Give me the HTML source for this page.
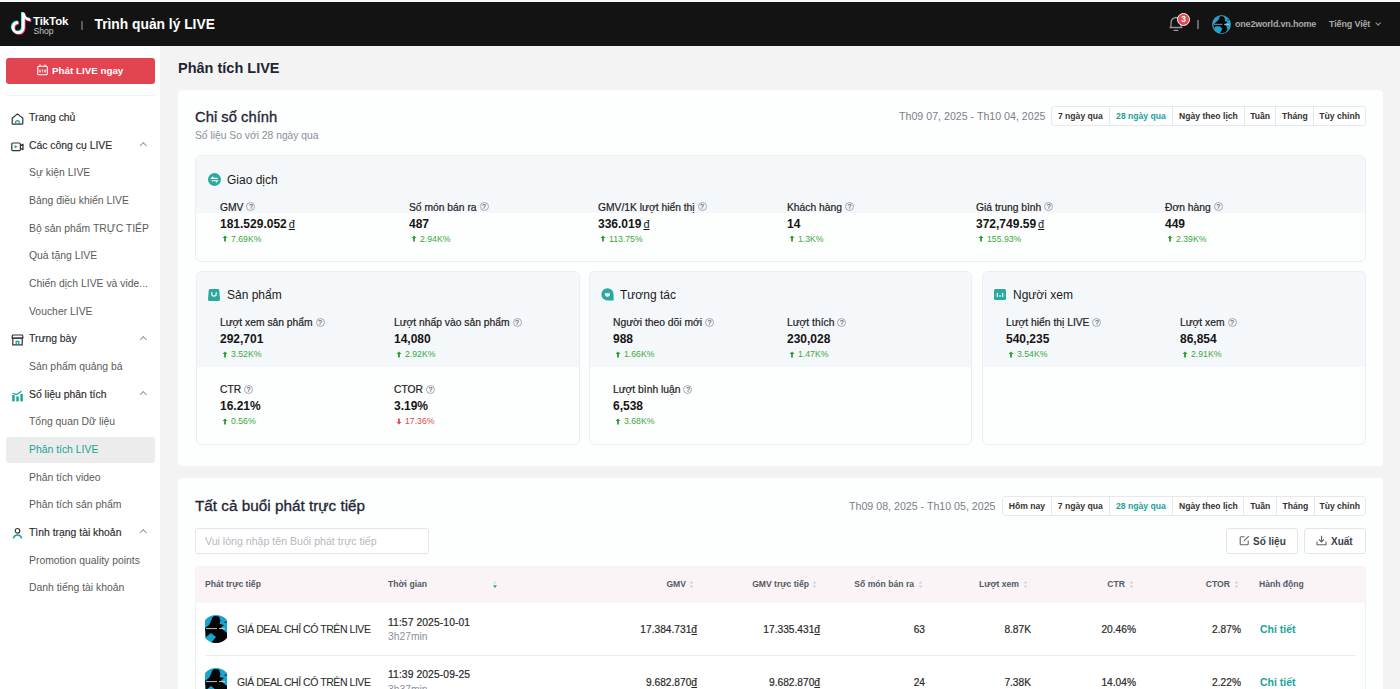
<!DOCTYPE html>
<html><head><meta charset="utf-8">
<style>
*{margin:0;padding:0;box-sizing:border-box}
html,body{width:1400px;height:689px;overflow:hidden;background:#f4f3f4;font-family:"Liberation Sans",sans-serif;color:#222}
.a{position:absolute;white-space:nowrap}
#top{position:absolute;left:0;top:0;width:1400px;height:2px;background:#f4f9f9}
#hdr{position:absolute;left:0;top:2px;width:1400px;height:44px;background:#131313}
#side{position:absolute;left:0;top:46px;width:160px;height:643px;background:#fff}
.mi{position:absolute;left:29px;font-size:10.4px;color:#2b2b2b;line-height:14px;-webkit-text-stroke:0.15px #2b2b2b}
.si{position:absolute;left:29px;font-size:10.4px;color:#5a5a5a;line-height:14px}
.chev{position:absolute;left:140.7px;width:4.6px;height:4.6px;border-left:1px solid #999;border-top:1px solid #999;transform:rotate(45deg)}
.card{position:absolute;left:178px;width:1205px;background:#fdfefe;border-radius:4px}
.grp{position:absolute;height:20px;border:1px solid #e6e8ec;border-radius:3px;display:flex;background:#fff}
.grp span{display:block;height:18px;line-height:18px;font-size:8.6px;font-weight:bold;color:#333;padding:0;text-align:center;white-space:nowrap;border-left:1px solid #e6e8ec}
.grp span:first-child{border-left:none}
.grp span.on{color:#1aa29a}
.box{position:absolute;border:1px solid #eceef2;border-radius:6px;background:linear-gradient(#f5f8fa 0,#f5f8fa 57px,#fdfefe 57px)}
.lbl{position:absolute;font-size:10.3px;color:#222;line-height:13px;-webkit-text-stroke:0.2px #222}
.val{position:absolute;font-size:12px;font-weight:bold;color:#151515;line-height:15px}
.chg{position:absolute;font-size:8.7px;color:#3aa83a;line-height:11px}
.q{display:inline-block;width:9px;height:9px;border:0.9px solid #a4a8b0;border-radius:50%;margin-left:3px;vertical-align:1.2px;font-size:6.5px;line-height:7.5px;text-align:center;color:#a0a4aa;font-weight:normal}
</style></head><body>
<div id="top"></div>
<div id="hdr">
<svg class="a" style="left:0;top:0" width="40" height="40" viewBox="0 2 40 40"><path d="M23.3 12.8 V27.6 A5.1 5.1 0 1 1 18.2 22.5 M23.3 13.3 C23.6 16.8 26.6 19.5 30.4 19.8" transform="translate(-0.9,-0.7)" fill="none" stroke="#25f4ee" stroke-width="2.8"/><path d="M23.3 12.8 V27.6 A5.1 5.1 0 1 1 18.2 22.5 M23.3 13.3 C23.6 16.8 26.6 19.5 30.4 19.8" transform="translate(0.9,0.7)" fill="none" stroke="#fe2c55" stroke-width="2.8"/><path d="M23.3 12.8 V27.6 A5.1 5.1 0 1 1 18.2 22.5 M23.3 13.3 C23.6 16.8 26.6 19.5 30.4 19.8" transform="translate(0,0)" fill="none" stroke="#fff" stroke-width="2.8"/></svg>
<div class="a" style="left:33px;top:11.5px;font-size:11.5px;font-weight:bold;color:#fff;line-height:14px;letter-spacing:-0.1px">TikTok</div>
<div class="a" style="left:33.5px;top:23.5px;font-size:8.6px;color:#c4c4c4;line-height:10px">Shop</div>
<div class="a" style="left:81px;top:19px;width:1.5px;height:9px;background:#5a5a5a"></div>
<div class="a" style="left:94.5px;top:13.5px;font-size:13.8px;font-weight:bold;color:#fff;line-height:18px">Trình quản lý LIVE</div>
<svg class="a" style="left:1168px;top:12px" width="16" height="18" viewBox="0 0 16 18">
<path d="M3 13V8.5a5 5 0 0 1 10 0V13" fill="none" stroke="#999" stroke-width="1.3"/>
<path d="M1.5 13.5h13" stroke="#999" stroke-width="1.4"/>
<path d="M6 16.3h4" stroke="#999" stroke-width="1.3" stroke-linecap="round"/>
</svg>
<div class="a" style="left:1177px;top:11px;width:13px;height:13px;border-radius:50%;background:#e5484d;border:1px solid #fff;color:#fff;font-size:8.5px;font-weight:bold;line-height:11px;text-align:center">3</div>
<div class="a" style="left:1197px;top:18px;width:1.5px;height:9px;background:#666"></div>
<svg class="a" style="left:1211.5px;top:12.5px" width="19" height="19" viewBox="0 0 22 22"><defs><clipPath id="av"><circle cx="11" cy="11" r="10.5"/></clipPath></defs><g clip-path="url(#av)"><rect width="22" height="22" fill="#1ba3d0"/><path d="M9 1.5 L13 1.5 L15 4 L15 7 L18 8 L16 10 L14 11 L17 13 L18 17 L15 21 L9 21 L12 16 L9 13 L4 13 L2.5 16 L1.5 11 L5 8 L8 5z" fill="#050505"/><path d="M17 5.5 L20 5 L19 6.5z" fill="#050505"/><path d="M2 10.8 H12 M14 10.8 H20" stroke="#e6e6e6" stroke-width="0.9" opacity="0.8"/></g><circle cx="11" cy="11" r="10.5" fill="none" stroke="#8cc" stroke-width="0.5"/></svg>
<div class="a" style="left:1235px;top:16px;font-size:9px;font-weight:bold;color:#a9a9a9;line-height:12px;letter-spacing:-0.2px">one2world.vn.home</div>
<div class="a" style="left:1329px;top:16px;font-size:9px;font-weight:bold;color:#a9a9a9;line-height:12px;letter-spacing:-0.15px">Tiếng Việt</div>
<div class="a" style="left:1375.5px;top:18.5px;width:4.3px;height:4.3px;border-right:1px solid #999;border-bottom:1px solid #999;transform:rotate(45deg)"></div>
</div>
<div id="side">
<div class="a" style="left:6px;top:12px;width:149px;height:26px;background:#e24452;border-radius:3px"></div>
<svg class="a" style="left:37px;top:18px" width="11" height="12" viewBox="0 0 11 12"><rect x="0.7" y="2.2" width="9.6" height="8.6" rx="1" fill="none" stroke="#fff" stroke-width="1.1"/><path d="M3 0.6 V3 M8 0.6 V3" stroke="#fff" stroke-width="1.1"/><path d="M2 5.5 L3 8.5 L4 5.5 M5.5 5.5 V8.5 M7 5.5 L8 8.5 L9 5.5" fill="none" stroke="#fff" stroke-width="0.7"/></svg>
<div class="a" style="left:52px;top:18px;font-size:9.8px;font-weight:bold;color:#fff;line-height:13px">Phát LIVE ngay</div>
<div class="a" style="left:6px;top:49px;width:149px;height:1px;background:#eef3f4"></div>
<div class="mi" style="top:65.0px">Trang chủ</div>
<svg class="a" style="left:11px;top:66.5px" width="13" height="12" viewBox="0 0 13 12"><path d="M1.2 5.2 L6.5 0.9 L11.8 5.2 V10.4 a0.8 0.8 0 0 1 -0.8 0.8 H2 a0.8 0.8 0 0 1 -0.8 -0.8z" fill="none" stroke="#333" stroke-width="1.2" stroke-linejoin="round"/><path d="M4.6 11.2 V9.6 a1.9 1.9 0 0 1 3.8 0 V11.2" fill="none" stroke="#1aa29a" stroke-width="1.3"/></svg>
<div class="mi" style="top:92.7px">Các công cụ LIVE</div>
<svg class="a" style="left:11px;top:95.5px" width="13" height="10" viewBox="0 0 13 10"><rect x="0.8" y="1" width="8.6" height="7.6" rx="1.2" fill="none" stroke="#333" stroke-width="1.2"/><path d="M9.4 3.6 L12 2.2 V7.6 L9.4 6.2" fill="none" stroke="#333" stroke-width="1.2" stroke-linejoin="round"/><path d="M3.6 3 L6.6 4.8 L3.6 6.6z" fill="#1aa29a"/></svg>
<div class="chev" style="top:96.8px"></div>
<div class="si" style="top:120.3px">Sự kiện LIVE</div>
<div class="si" style="top:148.0px">Bảng điều khiển LIVE</div>
<div class="si" style="top:175.7px">Bộ sản phẩm TRỰC TIẾP</div>
<div class="si" style="top:203.4px">Quà tặng LIVE</div>
<div class="si" style="top:231.0px">Chiến dịch LIVE và vide...</div>
<div class="si" style="top:258.7px">Voucher LIVE</div>
<div class="mi" style="top:286.4px">Trưng bày</div>
<svg class="a" style="left:11px;top:288.0px" width="13" height="12" viewBox="0 0 13 12"><path d="M1.5 1 H11.5 L12 4 H1z" fill="none" stroke="#333" stroke-width="1.2" stroke-linejoin="round"/><path d="M1.8 4 V10.8 H11.2 V4" fill="none" stroke="#333" stroke-width="1.2"/><path d="M1.2 4.2 H11.8" stroke="#333" stroke-width="1.2"/><path d="M5.2 10.8 V7.4 H7.8 V10.8" fill="none" stroke="#1aa29a" stroke-width="1.3"/></svg>
<div class="chev" style="top:290.5px"></div>
<div class="si" style="top:314.0px">Sản phẩm quảng bá</div>
<div class="mi" style="top:341.7px">Số liệu phân tích</div>
<svg class="a" style="left:11px;top:344.0px" width="13" height="12" viewBox="0 0 13 12"><rect x="1.2" y="5" width="2.4" height="6.4" fill="#1aa29a"/><rect x="5.3" y="6.4" width="2.4" height="5" fill="#1aa29a"/><rect x="9.4" y="4" width="2.4" height="7.4" fill="#1aa29a"/><path d="M1.5 3.2 L5.5 4.6 L10.5 1.2" fill="none" stroke="#1aa29a" stroke-width="1.2"/></svg>
<div class="chev" style="top:345.8px"></div>
<div class="si" style="top:369.4px">Tổng quan Dữ liệu</div>
<div class="a" style="left:6px;top:390.5px;width:149px;height:26px;background:#ececec;border-radius:3px"></div>
<div class="si" style="top:397.0px;color:#1aa29a">Phân tích LIVE</div>
<div class="si" style="top:424.7px">Phân tích video</div>
<div class="si" style="top:452.4px">Phân tích sản phẩm</div>
<div class="mi" style="top:480.0px">Tình trạng tài khoản</div>
<svg class="a" style="left:11px;top:481.0px" width="13" height="13" viewBox="0 0 13 13"><circle cx="6.5" cy="3.8" r="2.3" fill="none" stroke="#333" stroke-width="1.2"/><path d="M2.4 11 a4.3 4.3 0 0 1 8.2 0" fill="none" stroke="#1aa29a" stroke-width="1.3" stroke-linecap="round"/></svg>
<div class="chev" style="top:484.1px"></div>
<div class="si" style="top:507.7px">Promotion quality points</div>
<div class="si" style="top:535.4px">Danh tiếng tài khoản</div>
</div>
<div class="a" style="left:178px;top:60px;font-size:14.5px;font-weight:bold;color:#1e2533">Phân tích LIVE</div>
<div class="card" style="top:90px;height:376px"></div>
<div class="a" style="left:195px;top:108px;font-size:14.8px;color:#1e2533;line-height:18px;-webkit-text-stroke:0.3px #1e2533">Chỉ số chính</div>
<div class="a" style="left:195px;top:129px;font-size:10.3px;color:#8a8f99;line-height:13px">Số liệu So với 28 ngày qua</div>
<div class="a" style="left:899px;top:110px;font-size:10.65px;color:#7a808a;line-height:13px">Th09 07, 2025 - Th10 04, 2025</div>
<div class="grp" style="left:1051px;top:106px"><span style="width:56.8px">7 ngày qua</span><span style="width:63.3px" class="on">28 ngày qua</span><span style="width:71.7px">Ngày theo lịch</span><span style="width:31.6px">Tuần</span><span style="width:38.1px">Tháng</span><span style="width:51.4px">Tùy chỉnh</span></div>
<div class="box" style="left:195px;top:155px;width:1171px;height:107px"></div>
<svg class="a" style="left:208px;top:173.0px" width="13" height="13" viewBox="0 0 13 13"><circle cx="6.5" cy="6.5" r="6.5" fill="#2ba89f"/><path d="M9.6 5.4 H3.6 L5.2 3.7 M3.6 7.7 H9.6 L8 9.4" fill="none" stroke="#fff" stroke-width="1.15"/></svg>
<div class="a" style="left:227px;top:172.5px;font-size:12px;color:#1a1a1a;line-height:15px">Giao dịch</div>
<div class="lbl" style="left:220px;top:200.5px">GMV<span class="q">?</span></div>
<div class="val" style="left:220px;top:216.5px">181.529.052<span style="font-weight:normal;text-decoration:underline;margin-left:2px;font-size:11px">đ</span></div>
<div class="chg" style="left:220px;top:233.5px;color:#3aa83a"><svg width="6" height="7" viewBox="0 0 6 7" style="margin:0 3px 0 2px;vertical-align:-0.5px"><path d="M3 0.5 L5.5 3 H3.9 V6.5 H2.1 V3 H0.5z" fill="#2f9a2f"/></svg>7.69K%</div>
<div class="lbl" style="left:409px;top:200.5px">Số món bán ra<span class="q">?</span></div>
<div class="val" style="left:409px;top:216.5px">487</div>
<div class="chg" style="left:409px;top:233.5px;color:#3aa83a"><svg width="6" height="7" viewBox="0 0 6 7" style="margin:0 3px 0 2px;vertical-align:-0.5px"><path d="M3 0.5 L5.5 3 H3.9 V6.5 H2.1 V3 H0.5z" fill="#2f9a2f"/></svg>2.94K%</div>
<div class="lbl" style="left:598px;top:200.5px">GMV/1K lượt hiển thị<span class="q">?</span></div>
<div class="val" style="left:598px;top:216.5px">336.019<span style="font-weight:normal;text-decoration:underline;margin-left:2px;font-size:11px">đ</span></div>
<div class="chg" style="left:598px;top:233.5px;color:#3aa83a"><svg width="6" height="7" viewBox="0 0 6 7" style="margin:0 3px 0 2px;vertical-align:-0.5px"><path d="M3 0.5 L5.5 3 H3.9 V6.5 H2.1 V3 H0.5z" fill="#2f9a2f"/></svg>113.75%</div>
<div class="lbl" style="left:787px;top:200.5px">Khách hàng<span class="q">?</span></div>
<div class="val" style="left:787px;top:216.5px">14</div>
<div class="chg" style="left:787px;top:233.5px;color:#3aa83a"><svg width="6" height="7" viewBox="0 0 6 7" style="margin:0 3px 0 2px;vertical-align:-0.5px"><path d="M3 0.5 L5.5 3 H3.9 V6.5 H2.1 V3 H0.5z" fill="#2f9a2f"/></svg>1.3K%</div>
<div class="lbl" style="left:976px;top:200.5px">Giá trung bình<span class="q">?</span></div>
<div class="val" style="left:976px;top:216.5px">372,749.59<span style="font-weight:normal;text-decoration:underline;margin-left:2px;font-size:11px">đ</span></div>
<div class="chg" style="left:976px;top:233.5px;color:#3aa83a"><svg width="6" height="7" viewBox="0 0 6 7" style="margin:0 3px 0 2px;vertical-align:-0.5px"><path d="M3 0.5 L5.5 3 H3.9 V6.5 H2.1 V3 H0.5z" fill="#2f9a2f"/></svg>155.93%</div>
<div class="lbl" style="left:1165px;top:200.5px">Đơn hàng<span class="q">?</span></div>
<div class="val" style="left:1165px;top:216.5px">449</div>
<div class="chg" style="left:1165px;top:233.5px;color:#3aa83a"><svg width="6" height="7" viewBox="0 0 6 7" style="margin:0 3px 0 2px;vertical-align:-0.5px"><path d="M3 0.5 L5.5 3 H3.9 V6.5 H2.1 V3 H0.5z" fill="#2f9a2f"/></svg>2.39K%</div>
<div class="box" style="left:196px;top:271px;width:384px;height:174px;background:linear-gradient(#f5f8fa 0,#f5f8fa 95px,#fdfefe 95px)"></div>
<svg class="a" style="left:208.3px;top:288.5px" width="12" height="12" viewBox="0 0 12 12"><path d="M2.3 0 H9.7 a1.6 1.6 0 0 1 1.6 1.4 L12 10.4 a1.6 1.6 0 0 1 -1.6 1.6 H1.6 a1.6 1.6 0 0 1 -1.6 -1.6 L0.7 1.4 a1.6 1.6 0 0 1 1.6 -1.4z" fill="#2ba89f"/><path d="M3.8 3.2 V5 a2.2 2.2 0 0 0 4.4 0 V3.2" fill="none" stroke="#fff" stroke-width="1.2"/></svg>
<div class="a" style="left:227px;top:288px;font-size:12px;color:#1a1a1a;line-height:15px">Sản phẩm</div>
<div class="lbl" style="left:220px;top:316.0px">Lượt xem sản phẩm<span class="q">?</span></div>
<div class="val" style="left:220px;top:332.0px">292,701</div>
<div class="chg" style="left:220px;top:349.0px;color:#3aa83a"><svg width="6" height="7" viewBox="0 0 6 7" style="margin:0 3px 0 2px;vertical-align:-0.5px"><path d="M3 0.5 L5.5 3 H3.9 V6.5 H2.1 V3 H0.5z" fill="#2f9a2f"/></svg>3.52K%</div>
<div class="lbl" style="left:394px;top:316.0px">Lượt nhấp vào sản phẩm<span class="q">?</span></div>
<div class="val" style="left:394px;top:332.0px">14,080</div>
<div class="chg" style="left:394px;top:349.0px;color:#3aa83a"><svg width="6" height="7" viewBox="0 0 6 7" style="margin:0 3px 0 2px;vertical-align:-0.5px"><path d="M3 0.5 L5.5 3 H3.9 V6.5 H2.1 V3 H0.5z" fill="#2f9a2f"/></svg>2.92K%</div>
<div class="lbl" style="left:220px;top:383.0px">CTR<span class="q">?</span></div>
<div class="val" style="left:220px;top:399.0px">16.21%</div>
<div class="chg" style="left:220px;top:416.0px;color:#3aa83a"><svg width="6" height="7" viewBox="0 0 6 7" style="margin:0 3px 0 2px;vertical-align:-0.5px"><path d="M3 0.5 L5.5 3 H3.9 V6.5 H2.1 V3 H0.5z" fill="#2f9a2f"/></svg>0.56%</div>
<div class="lbl" style="left:394px;top:383.0px">CTOR<span class="q">?</span></div>
<div class="val" style="left:394px;top:399.0px">3.19%</div>
<div class="chg" style="left:394px;top:416.0px;color:#e5484d"><svg width="6" height="7" viewBox="0 0 6 7" style="margin:0 3px 0 2px;vertical-align:-0.5px"><path d="M3 6.5 L5.5 4 H3.9 V0.5 H2.1 V4 H0.5z" fill="#e5484d"/></svg>17.36%</div>
<div class="box" style="left:589px;top:271px;width:383px;height:174px;background:linear-gradient(#f5f8fa 0,#f5f8fa 95px,#fdfefe 95px)"></div>
<svg class="a" style="left:601px;top:288.0px" width="13" height="13" viewBox="0 0 13 13"><path d="M6.5 0.3 a6.1 6.1 0 1 0 0 12.2 H12.6 V6.4 a6.1 6.1 0 0 0 -6.1 -6.1z" fill="#2ba89f"/><path d="M3.8 5.2 H9.1 C9.1 7.6 8 8.7 6.45 8.7 C4.9 8.7 3.8 7.6 3.8 5.2z" fill="#fff"/></svg>
<div class="a" style="left:620px;top:288px;font-size:12px;color:#1a1a1a;line-height:15px">Tương tác</div>
<div class="lbl" style="left:613px;top:316.0px">Người theo dõi mới<span class="q">?</span></div>
<div class="val" style="left:613px;top:332.0px">988</div>
<div class="chg" style="left:613px;top:349.0px;color:#3aa83a"><svg width="6" height="7" viewBox="0 0 6 7" style="margin:0 3px 0 2px;vertical-align:-0.5px"><path d="M3 0.5 L5.5 3 H3.9 V6.5 H2.1 V3 H0.5z" fill="#2f9a2f"/></svg>1.66K%</div>
<div class="lbl" style="left:787px;top:316.0px">Lượt thích<span class="q">?</span></div>
<div class="val" style="left:787px;top:332.0px">230,028</div>
<div class="chg" style="left:787px;top:349.0px;color:#3aa83a"><svg width="6" height="7" viewBox="0 0 6 7" style="margin:0 3px 0 2px;vertical-align:-0.5px"><path d="M3 0.5 L5.5 3 H3.9 V6.5 H2.1 V3 H0.5z" fill="#2f9a2f"/></svg>1.47K%</div>
<div class="lbl" style="left:613px;top:383.0px">Lượt bình luận<span class="q">?</span></div>
<div class="val" style="left:613px;top:399.0px">6,538</div>
<div class="chg" style="left:613px;top:416.0px;color:#3aa83a"><svg width="6" height="7" viewBox="0 0 6 7" style="margin:0 3px 0 2px;vertical-align:-0.5px"><path d="M3 0.5 L5.5 3 H3.9 V6.5 H2.1 V3 H0.5z" fill="#2f9a2f"/></svg>3.68K%</div>
<div class="box" style="left:982px;top:271px;width:384px;height:174px;background:linear-gradient(#f5f8fa 0,#f5f8fa 95px,#fdfefe 95px)"></div>
<svg class="a" style="left:993.8px;top:289.0px" width="12" height="11" viewBox="0 0 12 11"><rect width="12" height="11" rx="1.5" fill="#2ba89f"/><path d="M3.3 4 V8 M6 6 V8 M8.7 4 V8" stroke="#e8f6f4" stroke-width="1.2"/></svg>
<div class="a" style="left:1013px;top:288px;font-size:12px;color:#1a1a1a;line-height:15px">Người xem</div>
<div class="lbl" style="left:1006px;top:316.0px">Lượt hiển thị LIVE<span class="q">?</span></div>
<div class="val" style="left:1006px;top:332.0px">540,235</div>
<div class="chg" style="left:1006px;top:349.0px;color:#3aa83a"><svg width="6" height="7" viewBox="0 0 6 7" style="margin:0 3px 0 2px;vertical-align:-0.5px"><path d="M3 0.5 L5.5 3 H3.9 V6.5 H2.1 V3 H0.5z" fill="#2f9a2f"/></svg>3.54K%</div>
<div class="lbl" style="left:1180px;top:316.0px">Lượt xem<span class="q">?</span></div>
<div class="val" style="left:1180px;top:332.0px">86,854</div>
<div class="chg" style="left:1180px;top:349.0px;color:#3aa83a"><svg width="6" height="7" viewBox="0 0 6 7" style="margin:0 3px 0 2px;vertical-align:-0.5px"><path d="M3 0.5 L5.5 3 H3.9 V6.5 H2.1 V3 H0.5z" fill="#2f9a2f"/></svg>2.91K%</div>
<div class="card" style="top:478px;height:230px"></div>
<div class="a" style="left:195px;top:496px;font-size:15.3px;color:#1e2533;line-height:19px;-webkit-text-stroke:0.3px #1e2533">Tất cả buổi phát trực tiếp</div>
<div class="a" style="left:849px;top:499.5px;font-size:10.65px;color:#7a808a;line-height:13px">Th09 08, 2025 - Th10 05, 2025</div>
<div class="grp" style="left:1002px;top:496px"><span style="width:47.9px">Hôm nay</span><span style="width:57.8px">7 ngày qua</span><span style="width:63.5px" class="on">28 ngày qua</span><span style="width:71.3px">Ngày theo lịch</span><span style="width:32.5px">Tuần</span><span style="width:37.9px">Tháng</span><span style="width:50.7px">Tùy chỉnh</span></div>
<div class="a" style="left:195px;top:528px;width:234px;height:26px;border:1px solid #e3e5e8;border-radius:3px;background:#fff"></div>
<div class="a" style="left:205px;top:534px;font-size:10.6px;color:#b5b8bd;line-height:14px">Vui lòng nhập tên Buổi phát trực tiếp</div>
<div class="a" style="left:1226px;top:528px;width:72px;height:26px;border:1px solid #e3e5e8;border-radius:3px;background:#fff"></div>
<svg class="a" style="left:1239px;top:535px" width="11" height="11" viewBox="0 0 11 11"><path d="M9.2 5.5 V9 a0.8 0.8 0 0 1 -0.8 0.8 H2 a0.8 0.8 0 0 1 -0.8 -0.8 V2.6 a0.8 0.8 0 0 1 0.8 -0.8 H5.5" fill="none" stroke="#5d6470" stroke-width="1.1"/><path d="M4.8 6.2 L9.8 1.2" stroke="#5d6470" stroke-width="1.1"/></svg>
<div class="a" style="left:1253px;top:534.5px;font-size:10px;font-weight:bold;color:#39404a;line-height:14px">Số liệu</div>
<div class="a" style="left:1304px;top:528px;width:62px;height:26px;border:1px solid #e3e5e8;border-radius:3px;background:#fff"></div>
<svg class="a" style="left:1316px;top:535px" width="11" height="11" viewBox="0 0 11 11"><path d="M1 6.5 V9.8 H10 V6.5" fill="none" stroke="#5d6470" stroke-width="1.1"/><path d="M5.5 0.8 V7 M3 4.5 L5.5 7 L8 4.5" fill="none" stroke="#5d6470" stroke-width="1.1"/></svg>
<div class="a" style="left:1331px;top:534.5px;font-size:10px;font-weight:bold;color:#39404a;line-height:14px">Xuất</div>
<div class="a" style="left:195px;top:566px;width:1171px;height:130px;border:1px solid #eeeff2;border-radius:4px;background:#fff"></div>
<div class="a" style="left:195px;top:566px;width:1171px;height:37px;background:#faf4f7;border-radius:4px 4px 0 0"></div>
<div class="a" style="left:205px;top:578px;font-size:8.6px;font-weight:bold;color:#555a63;line-height:12px">Phát trực tiếp</div>
<div class="a" style="left:388px;top:578px;font-size:8.6px;font-weight:bold;color:#555a63;line-height:12px">Thời gian</div>
<svg class="a" style="left:492px;top:580px" width="6" height="9" viewBox="0 0 6 9"><path d="M3 1 L5 3.5 H1z" fill="#d9dde2"/><path d="M3 8 L5 5.3 H1z" fill="#1aa29a"/></svg>
<div class="a" style="right:714px;top:578px;font-size:8.6px;font-weight:bold;color:#555a63;line-height:12px">GMV</div>
<svg class="a" style="left:689.0px;top:580px" width="5" height="9" viewBox="0 0 5 9"><path d="M2.5 1 L4.5 3.5 H0.5z M2.5 8 L4.5 5.5 H0.5z" fill="#d0d4da"/></svg>
<div class="a" style="right:591px;top:578px;font-size:8.6px;font-weight:bold;color:#555a63;line-height:12px">GMV trực tiếp</div>
<svg class="a" style="left:812.0px;top:580px" width="5" height="9" viewBox="0 0 5 9"><path d="M2.5 1 L4.5 3.5 H0.5z M2.5 8 L4.5 5.5 H0.5z" fill="#d0d4da"/></svg>
<div class="a" style="right:486px;top:578px;font-size:8.6px;font-weight:bold;color:#555a63;line-height:12px">Số món bán ra</div>
<svg class="a" style="left:918.0px;top:580px" width="5" height="9" viewBox="0 0 5 9"><path d="M2.5 1 L4.5 3.5 H0.5z M2.5 8 L4.5 5.5 H0.5z" fill="#d0d4da"/></svg>
<div class="a" style="right:381px;top:578px;font-size:8.6px;font-weight:bold;color:#555a63;line-height:12px">Lượt xem</div>
<svg class="a" style="left:1023.0px;top:580px" width="5" height="9" viewBox="0 0 5 9"><path d="M2.5 1 L4.5 3.5 H0.5z M2.5 8 L4.5 5.5 H0.5z" fill="#d0d4da"/></svg>
<div class="a" style="right:275px;top:578px;font-size:8.6px;font-weight:bold;color:#555a63;line-height:12px">CTR</div>
<svg class="a" style="left:1129.0px;top:580px" width="5" height="9" viewBox="0 0 5 9"><path d="M2.5 1 L4.5 3.5 H0.5z M2.5 8 L4.5 5.5 H0.5z" fill="#d0d4da"/></svg>
<div class="a" style="right:170px;top:578px;font-size:8.6px;font-weight:bold;color:#555a63;line-height:12px">CTOR</div>
<svg class="a" style="left:1234.0px;top:580px" width="5" height="9" viewBox="0 0 5 9"><path d="M2.5 1 L4.5 3.5 H0.5z M2.5 8 L4.5 5.5 H0.5z" fill="#d0d4da"/></svg>
<div class="a" style="left:1259px;top:578px;font-size:8.6px;font-weight:bold;color:#555a63;line-height:12px">Hành động</div>
<svg class="a" style="left:205px;top:615.0px" width="22" height="28" viewBox="0 0 22 28"><defs><clipPath id="c0"><circle cx="11" cy="14" r="14"/></clipPath></defs><g clip-path="url(#c0)"><rect width="22" height="28" fill="#1ba3d0"/><path d="M7 3 L9 1 L14 1.5 L15.5 6 L14.5 9 L19 10 L16 12.5 L17 14 L22 18 L22 28 L6 28 L11 22 L6 18 L1 22 L0 13 L4 10 L6 6z" fill="#050505"/><path d="M19 7 L22 6.5 L21 8z" fill="#050505"/><path d="M1 13.6 H12 M14 13.6 H20" stroke="#e6e6e6" stroke-width="1" opacity="0.85"/></g></svg>
<div class="a" style="left:237px;top:622.0px;font-size:10.5px;letter-spacing:-0.45px;color:#2a2a2a;line-height:14px;-webkit-text-stroke:0.05px #2a2a2a">GIÁ DEAL CHỈ CÓ TRÊN LIVE</div>
<div class="a" style="left:388px;top:615.5px;font-size:10.3px;color:#2a2a2a;line-height:13px;letter-spacing:0.1px;-webkit-text-stroke:0.2px #2a2a2a">11:57 2025-10-01</div>
<div class="a" style="left:388px;top:630.0px;font-size:10.3px;color:#8a8f99;line-height:13px">3h27min</div>
<div class="a" style="right:703px;top:623.0px;font-size:10.2px;color:#2a2a2a;line-height:14px;-webkit-text-stroke:0.2px #2a2a2a">17.384.731<u>đ</u></div>
<div class="a" style="right:580px;top:623.0px;font-size:10.2px;color:#2a2a2a;line-height:14px;-webkit-text-stroke:0.2px #2a2a2a">17.335.431<u>đ</u></div>
<div class="a" style="right:475px;top:623.0px;font-size:10.2px;color:#2a2a2a;line-height:14px;-webkit-text-stroke:0.2px #2a2a2a">63</div>
<div class="a" style="right:369px;top:623.0px;font-size:10.2px;color:#2a2a2a;line-height:14px;-webkit-text-stroke:0.2px #2a2a2a">8.87K</div>
<div class="a" style="right:264px;top:623.0px;font-size:10.2px;color:#2a2a2a;line-height:14px;-webkit-text-stroke:0.2px #2a2a2a">20.46%</div>
<div class="a" style="right:159px;top:623.0px;font-size:10.2px;color:#2a2a2a;line-height:14px;-webkit-text-stroke:0.2px #2a2a2a">2.87%</div>
<div class="a" style="left:1260px;top:622.0px;font-size:10.5px;font-weight:bold;color:#1aa29a;line-height:14px">Chi tiết</div>
<div class="a" style="left:205px;top:655px;width:1151px;height:1px;background:#ebebeb"></div>
<svg class="a" style="left:205px;top:667.5px" width="22" height="28" viewBox="0 0 22 28"><defs><clipPath id="c1"><circle cx="11" cy="14" r="14"/></clipPath></defs><g clip-path="url(#c1)"><rect width="22" height="28" fill="#1ba3d0"/><path d="M7 3 L9 1 L14 1.5 L15.5 6 L14.5 9 L19 10 L16 12.5 L17 14 L22 18 L22 28 L6 28 L11 22 L6 18 L1 22 L0 13 L4 10 L6 6z" fill="#050505"/><path d="M19 7 L22 6.5 L21 8z" fill="#050505"/><path d="M1 13.6 H12 M14 13.6 H20" stroke="#e6e6e6" stroke-width="1" opacity="0.85"/></g></svg>
<div class="a" style="left:237px;top:674.5px;font-size:10.5px;letter-spacing:-0.45px;color:#2a2a2a;line-height:14px;-webkit-text-stroke:0.05px #2a2a2a">GIÁ DEAL CHỈ CÓ TRÊN LIVE</div>
<div class="a" style="left:388px;top:668.0px;font-size:10.3px;color:#2a2a2a;line-height:13px;letter-spacing:0.1px;-webkit-text-stroke:0.2px #2a2a2a">11:39 2025-09-25</div>
<div class="a" style="left:388px;top:682.5px;font-size:10.3px;color:#8a8f99;line-height:13px">3h37min</div>
<div class="a" style="right:703px;top:675.5px;font-size:10.2px;color:#2a2a2a;line-height:14px;-webkit-text-stroke:0.2px #2a2a2a">9.682.870<u>đ</u></div>
<div class="a" style="right:580px;top:675.5px;font-size:10.2px;color:#2a2a2a;line-height:14px;-webkit-text-stroke:0.2px #2a2a2a">9.682.870<u>đ</u></div>
<div class="a" style="right:475px;top:675.5px;font-size:10.2px;color:#2a2a2a;line-height:14px;-webkit-text-stroke:0.2px #2a2a2a">24</div>
<div class="a" style="right:369px;top:675.5px;font-size:10.2px;color:#2a2a2a;line-height:14px;-webkit-text-stroke:0.2px #2a2a2a">7.38K</div>
<div class="a" style="right:264px;top:675.5px;font-size:10.2px;color:#2a2a2a;line-height:14px;-webkit-text-stroke:0.2px #2a2a2a">14.04%</div>
<div class="a" style="right:159px;top:675.5px;font-size:10.2px;color:#2a2a2a;line-height:14px;-webkit-text-stroke:0.2px #2a2a2a">2.22%</div>
<div class="a" style="left:1260px;top:674.5px;font-size:10.5px;font-weight:bold;color:#1aa29a;line-height:14px">Chi tiết</div>
</body></html>
